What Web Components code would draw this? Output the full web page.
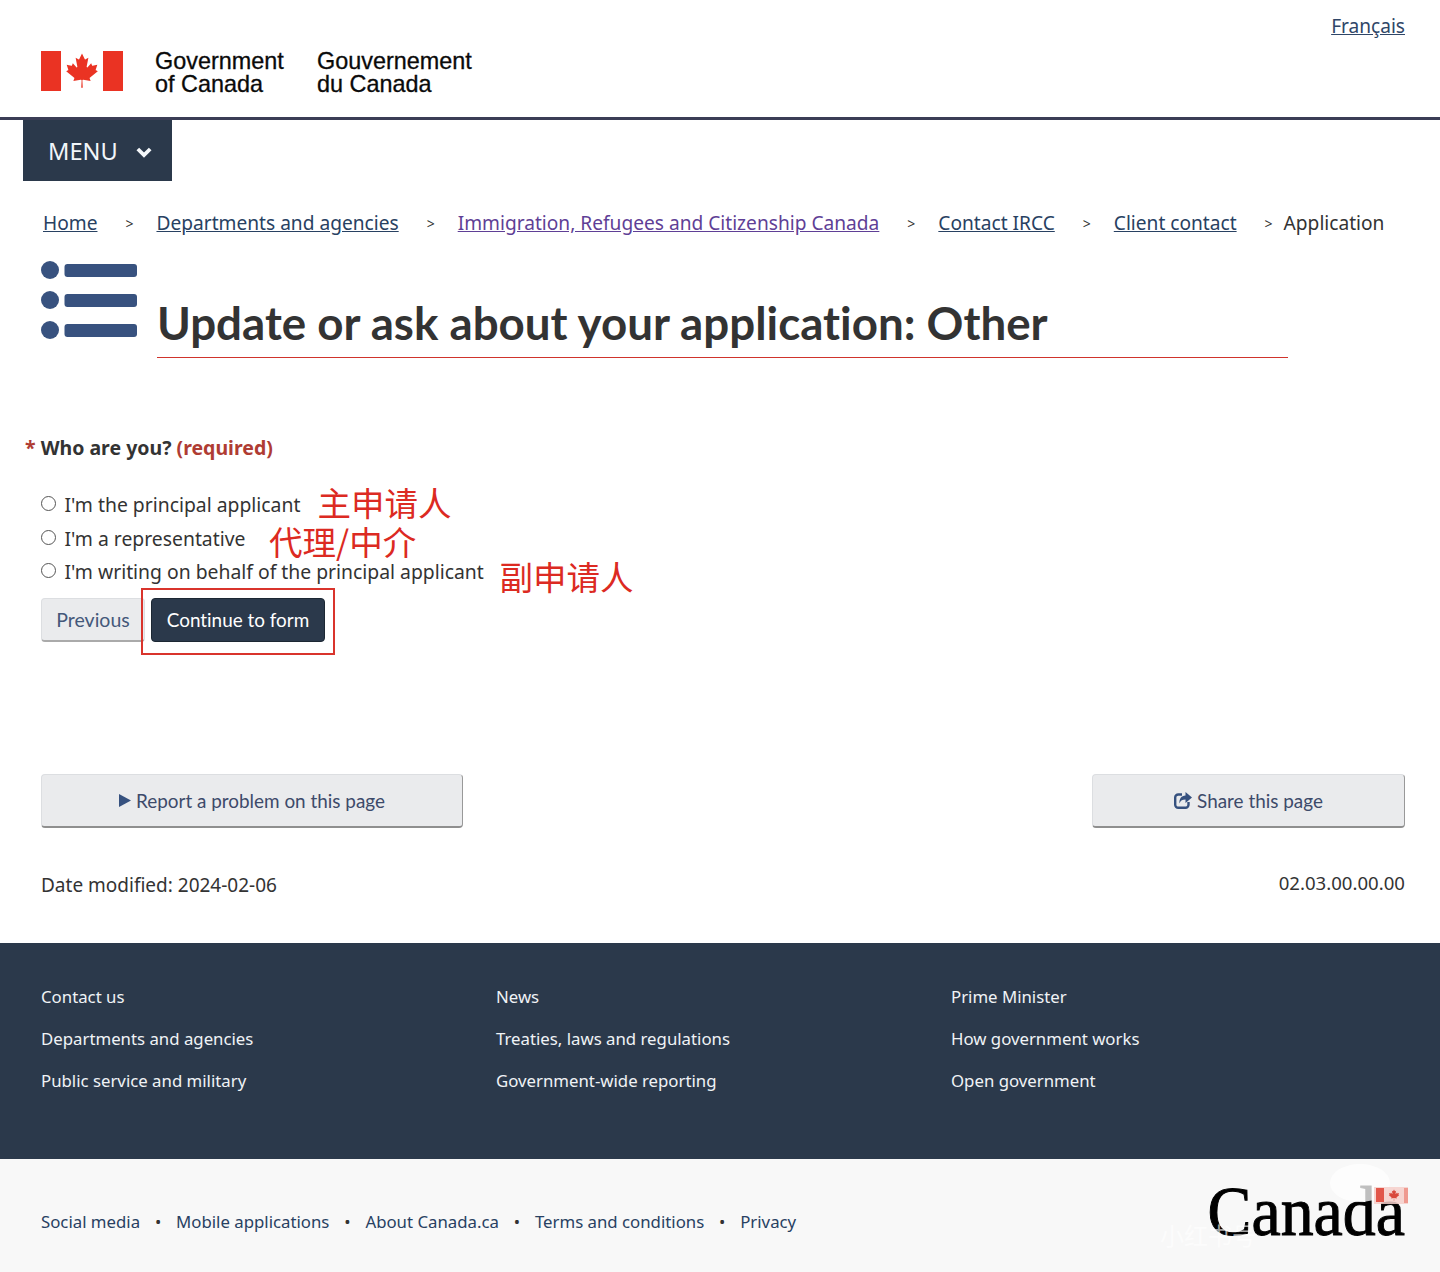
<!DOCTYPE html>
<html lang="en"><head><meta charset="utf-8"><title>Update or ask about your application: Other</title>
<style>
html,body{margin:0;padding:0;background:#fff}
body{font-family:"Noto Sans",sans-serif;color:#333;width:1440px;height:1272px;overflow:hidden;display:flex;flex-direction:column;position:relative}
</style></head><body>
<gc-header></gc-header>
<gc-menu></gc-menu>
<gc-breadcrumb></gc-breadcrumb>
<gc-title>Update or ask about your application: Other</gc-title>
<gc-form></gc-form>
<gc-page-actions></gc-page-actions>
<gc-page-meta></gc-page-meta>
<gc-footer-main></gc-footer-main>
<gc-footer-sub></gc-footer-sub>
<gc-notes></gc-notes>
<script>
const LEAF='m-90 2030 45-863a95 95 0 0 0-111-98l-859 151 116-320a65 65 0 0 0-20-73l-941-762 212-99a65 65 0 0 0 34-79l-186-572 542 115a65 65 0 0 0 73-38l105-247 423 454a65 65 0 0 0 111-57l-204-1052 327 189a65 65 0 0 0 91-27l332-652 332 652a65 65 0 0 0 91 27l327-189-204 1052a65 65 0 0 0 111 57l423-454 105 247a65 65 0 0 0 73 38l542-115-186 572a65 65 0 0 0 34 79l212 99-941 762a65 65 0 0 0-20 73l116 320-859-151a95 95 0 0 0-111 98l45 863z';
function def(name,html){
  customElements.define(name,class extends HTMLElement{
    constructor(){super();this.attachShadow({mode:'open'}).innerHTML=html;}
  });
}
def('gc-flag',`<style>:host{display:block;width:82px;height:40px}svg{display:block}</style>
<svg width="82" height="40" viewBox="0 0 82 40"><rect width="20" height="40" fill="#ea3323"/><rect x="62" width="20" height="40" fill="#ea3323"/>
<g transform="translate(41 19.6) scale(.0085)"><path d="${LEAF}" fill="#ea3323"/></g></svg>`);
def('gc-header',`<style>
:host{display:flex;box-sizing:border-box;height:120px;border-bottom:3px solid #3b3d56;padding:0 35px 0 41px;position:relative;justify-content:space-between}
.sig{display:flex;align-items:flex-start;padding-top:51px}
.t{font:500 23.4px/23px "Liberation Sans",Arial,sans-serif;color:#0a0a0a;margin-top:-1px;-webkit-text-stroke:.3px #0a0a0a}
.en{margin-left:32px;width:162px}
a{font-size:19.1px;line-height:26px;color:#2f4667;margin-top:13px;height:26px}
</style>
<div class="sig"><gc-flag></gc-flag><div class="t en">Government<br>of Canada</div><div class="t">Gouvernement<br>du Canada</div></div>
<a href="#" lang="fr">Français</a>`);
def('gc-menu',`<style>
:host{display:flex;align-items:center;align-self:flex-start;box-sizing:border-box;margin-left:23px;width:149px;height:61px;background:#2b394b;color:#f2f6fa;padding-left:25px;font-size:23.6px;font-weight:400}
svg{margin-left:18px;margin-top:2px}
</style>MENU<svg width="16" height="12" viewBox="0 0 16 12"><path d="M1.800 3 8 9 14.200 3" fill="none" stroke="#f4f7fa" stroke-width="3.800"/></svg>`);
def('gc-breadcrumb',`<style>
:host{display:flex;align-items:center;height:28px;margin-top:28px;padding-left:43px;font-size:19.15px;color:#333;white-space:nowrap}
a{color:#284162}a.v{color:#5f3f96}
i{font:normal 14px "Noto Sans",sans-serif;width:8px;margin:0 23px 0 28px;color:#333}
</style><a href="#">Home</a><i>&gt;</i><a href="#">Departments and agencies</a><i>&gt;</i><a class="v" href="#">Immigration, Refugees and Citizenship Canada</a><i>&gt;</i><a href="#">Contact IRCC</a><i>&gt;</i><a href="#">Client contact</a><i style="margin-right:11px">&gt;</i><span>Application</span>`);
def('gc-list-icon',`<style>:host{display:block;width:96px;height:78px;flex:none}svg{display:block}</style>
<svg width="96" height="78" viewBox="0 0 96 78" fill="#38527f"><circle cx="9" cy="9" r="9"/><rect x="23.500" y="3" width="72.500" height="13" rx="3"/><circle cx="9" cy="39" r="9"/><rect x="23.500" y="33" width="72.500" height="13" rx="3"/><circle cx="9" cy="69" r="9"/><rect x="23.500" y="63" width="72.500" height="13" rx="3"/></svg>`);
def('gc-title',`<style>
:host{display:flex;margin-top:24px;padding-left:41px;height:97px;align-items:flex-start}
h1{margin:0 0 0 20px;box-sizing:border-box;width:1131px;height:97px;padding-top:32px;border-bottom:1px solid #d0342c;font:700 45.7px/60px Lato,sans-serif;font-variant-ligatures:none;color:#333;white-space:nowrap}
</style><gc-list-icon></gc-list-icon><h1><slot></slot></h1>`);
def('gc-form',`<style>
:host{display:block;padding:72px 0 0 25px;height:286px;box-sizing:border-box}
.q{font-size:19.5px;font-weight:700;line-height:36px;height:36px;color:#333}
.r{color:#af3c33}
.opts{margin:22px 0 0 16px;display:flex;flex-direction:column}
label{display:flex;align-items:center;height:33.5px;font-size:19.35px;color:#333;white-space:nowrap}
input{appearance:none;width:15px;height:15px;border:1.2px solid #555;border-radius:50%;margin:0 8.500px 0 0;box-sizing:border-box;background:#fff;position:relative;top:-1px}
.b{display:flex;margin:9px 0 0 16px;gap:6px}
button{font:400 18.9px Lato,sans-serif;font-variant-ligatures:none;height:44px;border-radius:4px;border:0;padding:0}
.p{width:104px;background:#eaebed;color:#44587a;border:1px solid #dcdee1;border-bottom:2px solid #aaa;font-size:19.5px}
.c{width:174px;background:#2b394b;color:#fff;border:1px solid #1c2733}
</style><div class="q"><span class="r">*</span> Who are you? <span class="r">(required)</span></div>
<div class="opts"><label><input type="radio" name="w">I'm the principal applicant</label><label><input type="radio" name="w">I'm a representative</label><label><input type="radio" name="w">I'm writing on behalf of the principal applicant</label></div>
<div class="b"><button class="p">Previous</button><button class="c">Continue to form</button></div>`);
def('gc-page-actions',`<style>
:host{display:flex;justify-content:space-between;padding:0 35px 0 41px;margin-top:130px}
button{font:400 18.9px Lato,sans-serif;font-variant-ligatures:none;height:54px;border:1px solid #dcdee1;border-bottom:2px solid #8f8f8f;border-right-color:#999;border-radius:4px;background:#eaebed;color:#3d4a6a;display:flex;align-items:center;justify-content:center;gap:5px;padding:0;box-sizing:border-box}
.a{width:422px}.s{width:313px}
svg{display:block}
</style><button class="a"><svg width="12" height="13" viewBox="0 0 12 13"><path d="M0 0 12 6.5 0 13z" fill="#36517f"/></svg>Report a problem on this page</button>
<button class="s"><svg width="18" height="17" viewBox="0 0 18 17"><path d="M8 2.5H4.2A3 3 0 0 0 1.2 5.500V12.800A3 3 0 0 0 4.200 15.800H11.500A3 3 0 0 0 14.500 12.800V10" fill="none" stroke="#36517f" stroke-width="2.400"/><path d="M11.500 0 18 5.500 11.500 11V7.600C8.500 7.600 6.500 8.500 5.500 11.500 5 6.500 7.500 3.600 11.500 3.400z" fill="#36517f"/></svg>Share this page</button>`);
def('gc-page-meta',`<style>
:host{display:flex;justify-content:space-between;padding:0 35px 0 41px;margin-top:42px;height:73px;font-size:19px;color:#333}
div{line-height:30px}.v{margin-top:-2px;font-size:18.6px}
</style><div>Date modified: 2024-02-06</div><div class="v">02.03.00.00.00</div>`);
def('gc-footer-main',`<style>
:host{display:grid;grid-template-columns:repeat(3,455px);grid-auto-rows:42px;align-content:start;align-items:center;box-sizing:border-box;height:216px;padding:32px 0 0 41px;background:#2b394b;font-size:16.8px;color:#f0f3f6}
</style><span>Contact us</span><span>News</span><span>Prime Minister</span><span>Departments and agencies</span><span>Treaties, laws and regulations</span><span>How government works</span><span>Public service and military</span><span>Government-wide reporting</span><span>Open government</span>`);
def('gc-wordmark',`<style>
:host{display:block;position:relative;width:197px;height:60px;color:#000}
span{display:block;font:400 70px/60px "Liberation Serif",serif;-webkit-text-stroke:1px #000;transform:scaleX(.94);transform-origin:100% 50%;position:absolute;right:0;top:1px;white-space:nowrap}
svg{position:absolute;right:-3px;top:6px;overflow:visible}
</style><span>Canada</span><svg width="40" height="18" viewBox="0 0 40 18"><ellipse cx="-8" cy="-4" rx="30" ry="19" fill="#fff" opacity=".75"/><rect x="6" y="0" width="34" height="17" fill="#f6cfca" opacity=".85"/><rect x="8" y="1" width="8" height="14" fill="#e2564a"/><rect x="36" y="1" width="4" height="15" fill="#ef9a90"/><g transform="translate(26 8) scale(.0028)"><path d="${LEAF}" fill="#d9483c"/></g></svg>`);
def('gc-footer-sub',`<style>
:host{display:flex;justify-content:space-between;align-items:center;box-sizing:border-box;height:113px;background:#f8f8f8;padding:0 35px 0 41px;font-size:16.8px;color:#284162;white-space:nowrap}
nav{display:flex;align-items:center;margin-top:12px}
b{width:36px;text-align:center;font-weight:400;color:#333}
gc-wordmark{margin-top:-9px}
</style><nav><span>Social media</span><b>•</b><span>Mobile applications</span><b>•</b><span>About Canada.ca</span><b>•</b><span>Terms and conditions</span><b>•</b><span>Privacy</span></nav><gc-wordmark></gc-wordmark>`);
def('gc-notes',`<style>
:host{position:absolute;inset:0;pointer-events:none;display:block}
span{position:absolute;font:400 33.5px/40px "Noto Sans CJK SC",sans-serif;color:#dc2a22;white-space:nowrap}
span.w{font-size:24px;line-height:30px;color:rgba(255,255,255,.65);left:1160px;top:1220px}
i{position:absolute;left:141px;top:588px;width:194px;height:67px;box-sizing:border-box;border:2px solid #d9342c}
</style><span style="left:317.500px;top:482px">主申请人</span><span style="left:269px;top:521px">代理/中介</span><span style="left:499.500px;top:556px">副申请人</span><i></i><span class="w">小红书号</span>`);
</script>
</body></html>
